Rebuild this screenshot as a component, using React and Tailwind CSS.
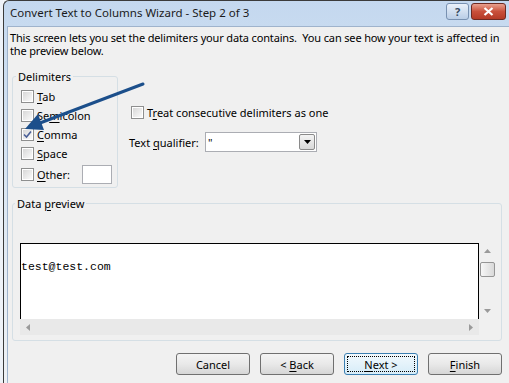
import React from "react";

function Check({ checked }) {
	return (
		<span className="w-[13px] h-[13px] shrink-0 border border-[#8e8f8f] bg-white p-[1px] flex">
			<span className="flex-1 bg-gradient-to-br from-[#d8d8d8] to-[#fafafa] flex items-center justify-center">
				{checked && (
					<svg width="9" height="9" viewBox="0 0 9 9">
						<path d="M1 4.5 L3.5 7 L8 1.5" fill="none" stroke="#4a5f97" strokeWidth="1.6" />
					</svg>
				)}
			</span>
		</span>
	);
}

function U({ children }) {
	return <span className="underline underline-offset-[2px]">{children}</span>;
}

function Row({ checked, children }) {
	return (
		<div className="h-[19px] flex items-center gap-[3px]">
			<Check checked={checked} />
			<span className="leading-[15px] whitespace-nowrap">{children}</span>
		</div>
	);
}

function Btn({ children, primary }) {
	if (primary) {
		return (
			<div className="w-[74px] h-[22px] rounded-[3px] border border-[#3c7fb1] bg-gradient-to-b from-[#f2f9fd] to-[#d6ecf8] p-[2px] flex">
				<div className="flex-1 border border-dotted border-black flex items-center justify-center leading-[15px] whitespace-pre">{children}</div>
			</div>
		);
	}
	return (
		<div className="w-[74px] h-[22px] rounded-[3px] border border-[#707070] bg-gradient-to-b from-[#f4f4f4] via-[#e9e9e9] to-[#d6d6d6] flex items-center justify-center leading-[15px] whitespace-pre">
			{children}
		</div>
	);
}

function Tri({ dir }) {
	const d = { up: "M0 4 L3.5 0 L7 4 Z", down: "M0 0 L7 0 L3.5 4 Z", left: "M4 0 L4 7 L0 3.5 Z", right: "M0 0 L4 3.5 L0 7 Z" }[dir];
	const w = dir === "up" || dir === "down" ? 7 : 4;
	const h = dir === "up" || dir === "down" ? 4 : 7;
	return (
		<svg width={w} height={h} viewBox={`0 0 ${w} ${h}`}>
			<path d={d} fill="#9a9a9a" />
		</svg>
	);
}

export default function App() {
	return (
		<div className="relative w-[509px] h-[383px] overflow-hidden bg-[#f4f7fb] flex font-['Noto_Sans',sans-serif] text-[11px] text-black">
			<div className="w-[3px] shrink-0 bg-[#eef2f8]" />
			<div className="flex-1 min-w-0 flex flex-col border-l border-t border-[#3b3b3b] rounded-tl-[6px] bg-gradient-to-b from-[#c4d8ef] via-[#dce7f3] to-[#eef1f5]">
				<div className="h-[25px] shrink-0 flex items-start">
					<div className="pl-[6px] pt-[4px] leading-[16px] text-[11.5px] text-[#1b1b1b] whitespace-nowrap">Convert Text to Columns Wizard - Step 2 of 3</div>
					<div className="ml-auto mr-[3px] mt-[2px] shrink-0 flex gap-[2px]">
						<div className="w-[23px] h-[17px] rounded-[3px] border border-[#7891b1] bg-gradient-to-b from-[#eaf1fa] to-[#b9cde6] flex items-center justify-center text-[11px] leading-none text-[#34495f] font-bold">?</div>
						<div className="w-[35px] h-[17px] rounded-[3px] border border-[#6d2a22] bg-gradient-to-b from-[#e8a08f] via-[#c9503b] to-[#b53a26] flex items-center justify-center">
							<svg width="11" height="9" viewBox="0 0 11 9">
								<path d="M1.5 1 L9.5 8 M9.5 1 L1.5 8" stroke="#fff" strokeWidth="2.2" />
							</svg>
						</div>
					</div>
				</div>
				<div className="flex-1 ml-[3px] border-l border-t border-[#9fb3cc] bg-[#f0f0f0] flex flex-col">
					<p className="pl-[2px] pt-[4px] leading-[13px] whitespace-pre tracking-[-0.15px]">
						{"This screen lets you set the delimiters your data contains.  You can see how your text is affected in"}
						<br />
						{"the preview below."}
					</p>

					<div className="flex items-start mt-[12px] ml-[4px]">
						<fieldset className="w-[106px] shrink-0 border border-[#d5dfe5] rounded-[3px] pl-[8px] pt-[3px] pb-[2px]">
							<legend className="leading-[15px] px-[2px] -ml-[5px]">Delimiters</legend>
							<Row>
								<U>T</U>ab
							</Row>
							<Row>
								Se<U>m</U>icolon
							</Row>
							<Row checked>
								<U>C</U>omma
							</Row>
							<Row>
								<U>S</U>pace
							</Row>
							<div className="h-[22px] flex items-center gap-[3px]">
								<Check />
								<span className="w-[42px] leading-[15px]">
									<U>O</U>ther:
								</span>
								<span className="w-[30px] h-[19px] border border-[#abadb3] bg-white" />
							</div>
						</fieldset>

						<div className="ml-[11px] pt-[36px] flex flex-col">
							<div className="h-[15px] ml-[2px] flex items-center gap-[3px]">
								<Check />
								<span className="leading-[15px] whitespace-nowrap">
									T<U>r</U>eat consecutive delimiters as one
								</span>
							</div>
							<div className="mt-[12px] h-[20px] flex items-center">
								<span className="w-[76px] shrink-0 leading-[15px] whitespace-nowrap">
									Text <U>q</U>ualifier:
								</span>
								<div className="w-[112px] h-[20px] border border-[#abadb3] bg-white flex items-center">
									<span className="pl-[2px] leading-[15px]">"</span>
									<div className="ml-auto mr-[1px] w-[16px] h-[16px] rounded-[2px] border border-[#8a8a8a] bg-gradient-to-b from-[#f4f4f4] to-[#d8d8d8] flex items-center justify-center">
										<svg width="7" height="4" viewBox="0 0 7 4">
											<path d="M0 0 L7 0 L3.5 4 Z" fill="#000" />
										</svg>
									</div>
								</div>
							</div>
						</div>
					</div>

					<fieldset className="mt-[8px] ml-[4px] w-[490px] shrink-0 border border-[#d5dfe5] rounded-[3px] pl-[7px] pt-[32px] pb-[5px]">
						<legend className="leading-[15px] px-[2px] -ml-[5px]">
							Data <U>p</U>review
						</legend>
						<div className="flex">
							<div className="w-[459px] h-[76px] border-l border-t border-r border-black bg-white pt-[16px] font-['Liberation_Mono',monospace] text-[11.5px] leading-[14px]">
								test@test.com
							</div>
							<div className="w-[16px] h-[76px] flex flex-col items-center">
								<div className="h-[16px] flex items-center justify-center">
									<Tri dir="up" />
								</div>
								<div className="mt-[3px] w-[15px] h-[15px] rounded-[2px] border border-[#959595] bg-gradient-to-r from-[#f7f7f7] to-[#d9d9d9]" />
								<div className="mt-auto h-[16px] flex items-center justify-center">
									<Tri dir="down" />
								</div>
							</div>
						</div>
						<div className="w-[459px] h-[16px] bg-[#e9e9e9] flex items-center justify-between">
							<div className="w-[16px] flex justify-center">
								<Tri dir="left" />
							</div>
							<div className="w-[16px] flex justify-center">
								<Tri dir="right" />
							</div>
						</div>
					</fieldset>

					<div className="mt-[12px] ml-[4px] w-[490px] flex justify-end gap-[10px]">
						<Btn>Cancel</Btn>
						<Btn>
							{"< "}
							<U>B</U>ack
						</Btn>
						<Btn primary>
							<U>N</U>ext{" >"}
						</Btn>
						<Btn>
							<U>F</U>inish
						</Btn>
					</div>
				</div>
			</div>

			<svg className="absolute left-0 top-0 pointer-events-none" width="509" height="383" viewBox="0 0 509 383">
				<path d="M143 84 L40 123" stroke="#1c4f8b" strokeWidth="3" strokeLinecap="round" />
				<path d="M25 129 L44 130 L38 114 Z" fill="#1c4f8b" />
			</svg>
		</div>
	);
}
